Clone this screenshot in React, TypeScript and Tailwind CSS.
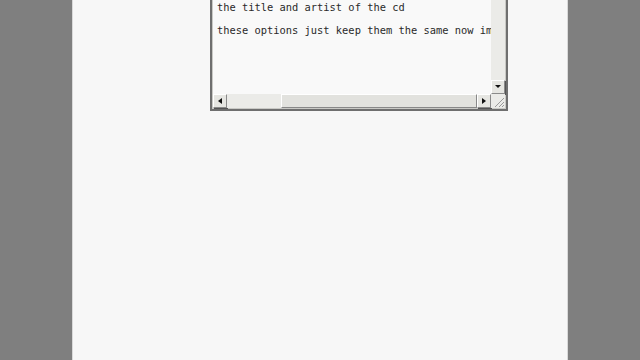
import React from "react";

function Arrow({ dir }: { dir: "left" | "right" | "down" }) {
  const pts =
    dir === "left" ? "5,1 1,4 5,7" : dir === "right" ? "1,1 5,4 1,7" : "1,2 7,2 4,5";
  return (
    <svg width={dir === "down" ? 8 : 6} height={8} viewBox={dir === "down" ? "0 0 8 8" : "0 0 6 8"}>
      <polygon points={pts} fill="#111" />
    </svg>
  );
}

function ScrollButton({ dir }: { dir: "left" | "right" | "down" }) {
  return (
    <div className="flex h-[14px] w-[14px] shrink-0 items-center justify-center border border-t-white border-l-white border-r-[#8a8a8a] border-b-[#8a8a8a] bg-[#e6e6e2] shadow-[1px_1px_0_#555]">
      <Arrow dir={dir} />
    </div>
  );
}

export default function App() {
  return (
    <div className="flex h-[360px] w-[640px] justify-center overflow-hidden bg-[#7f7f7f]">
      <div className="h-full w-[496px] border-x border-x-[#d9d9d9] bg-[#f7f7f7]">
        <div className="ml-[137px] mt-[-40px] flex h-[151px] w-[298px] flex-col border-2 border-[#6f6f6f] bg-[#c9c9c5] p-px">
          <div className="flex min-h-0 flex-1">
            <div
              className="flex-1 overflow-hidden bg-[#f9f9f9] pl-[4px] pt-[33px] text-[10.4px] text-[#2a2a2a]"
              style={{ fontFamily: '"DejaVu Sans Mono", monospace' }}
            >
              <div className="leading-[23px] whitespace-nowrap">the title and artist of the cd</div>
              <div className="leading-[23px] whitespace-nowrap">
                these options just keep them the same now im<span className="inline-block h-[11px] w-px translate-y-[2px] bg-black" />
              </div>
            </div>
            <div className="flex w-[14px] flex-col justify-end bg-[#ebebe8]">
              <ScrollButton dir="down" />
            </div>
          </div>
          <div className="flex h-[14px]">
            <ScrollButton dir="left" />
            <div className="flex flex-1 bg-[#ebebe8]">
              <div className="w-[54px]" />
              <div className="flex-1 border-b border-r border-b-[#888] border-r-[#888] border-t border-l border-t-white border-l-white bg-[#e2e2de]" />
            </div>
            <ScrollButton dir="right" />
            <div className="relative h-[14px] w-[14px] bg-[#ebebe8]">
              <svg width="14" height="14" viewBox="0 0 14 14" className="absolute inset-0">
                <path d="M13 4 L4 13 M13 8 L8 13 M13 11 L11 13" stroke="#9a9a9a" strokeWidth="1" />
              </svg>
            </div>
          </div>
        </div>
      </div>
    </div>
  );
}
